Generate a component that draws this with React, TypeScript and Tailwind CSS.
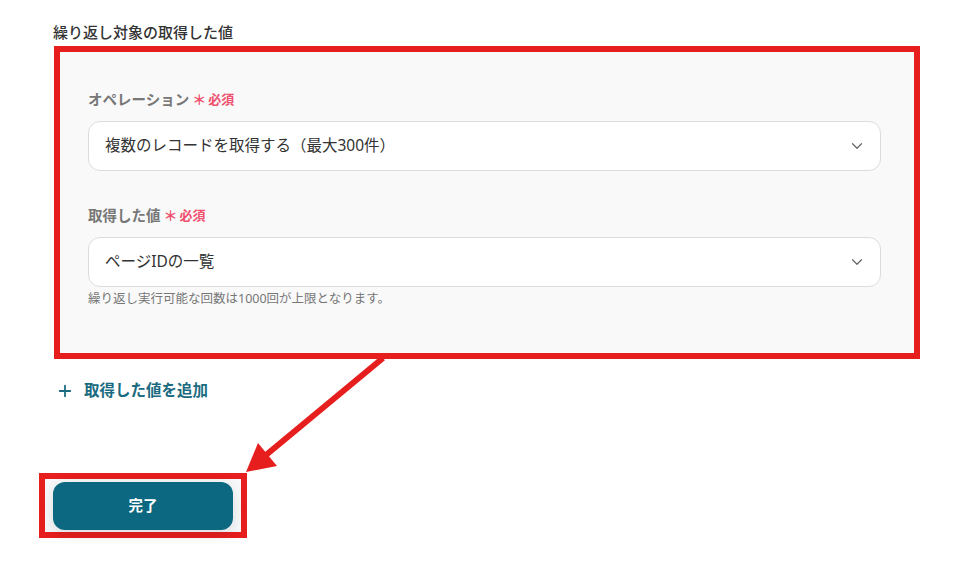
import { ChevronDown, Plus } from "lucide-react";

const Required = () => (
  <span className="ml-[3px] inline-flex items-center text-[13px] font-bold text-[#f0506e]">
    <span className="mr-[2px] text-[14px] leading-none">＊</span>
    必須
  </span>
);

const SelectBox = ({ value }: { value: string }) => (
  <div className="flex h-[50px] items-center justify-between rounded-[12px] border border-[#dcdcdc] bg-white pl-[16px] pr-[14px]">
    <span className="text-[15.5px] text-[#333]">{value}</span>
    <ChevronDown size={18} strokeWidth={1.6} className="text-[#666]" />
  </div>
);

export default function App() {
  return (
    <div
      className="relative h-[561px] w-[958px] overflow-hidden bg-white"
      style={{ fontFamily: '"Noto Sans", "Noto Sans CJK JP", sans-serif' }}
    >
      <div className="pt-[22px]">
        <div className="ml-[53px] h-[20px] text-[15px] font-medium leading-[20px] text-[#333]">
          繰り返し対象の取得した値
        </div>

        <div className="ml-[54px] mt-[4px] w-[866px] border-[6px] border-[#e61e1e] bg-[#f9f9f9] pb-[46px] pl-[28px] pr-[33px] pt-[38px]">
          <div className="flex h-[20px] items-center text-[14.5px] font-bold text-[#777]">
            オペレーション
            <Required />
          </div>
          <div className="mt-[11px]">
            <SelectBox value="複数のレコードを取得する（最大300件）" />
          </div>

          <div className="mt-[35px] flex h-[20px] items-center text-[14.5px] font-bold text-[#777]">
            取得した値
            <Required />
          </div>
          <div className="mt-[11px]">
            <SelectBox value="ページIDの一覧" />
          </div>
          <div className="mt-[4px] h-[16px] text-[12.5px] leading-[16px] text-[#777]">
            繰り返し実行可能な回数は1000回が上限となります。
          </div>
        </div>

        <div className="ml-[56px] mt-[22px] flex h-[20px] items-center gap-[10px] text-[15.5px] font-bold text-[#1b6b80]">
          <Plus size={18} strokeWidth={2.4} />
          取得した値を追加
        </div>

        <div className="ml-[39px] mt-[72px] w-[208px] border-[6px] border-[#e61e1e] bg-[#f7f8f9] pb-[2px] pl-[8px] pr-[8px] pt-[3px]">
          <div className="flex h-[48px] w-[180px] items-center justify-center rounded-[12px] bg-[#0b6880] text-[14.5px] font-bold text-white shadow-[0_4px_14px_rgba(0,0,0,0.12)]">
            完了
          </div>
        </div>
      </div>

      <svg className="pointer-events-none absolute left-0 top-0" width="958" height="561">
        <line x1="383" y1="358" x2="266" y2="455" stroke="#e61e1e" strokeWidth="6" />
        <polygon points="246,472 258,443 277,466" fill="#e61e1e" />
      </svg>
    </div>
  );
}
